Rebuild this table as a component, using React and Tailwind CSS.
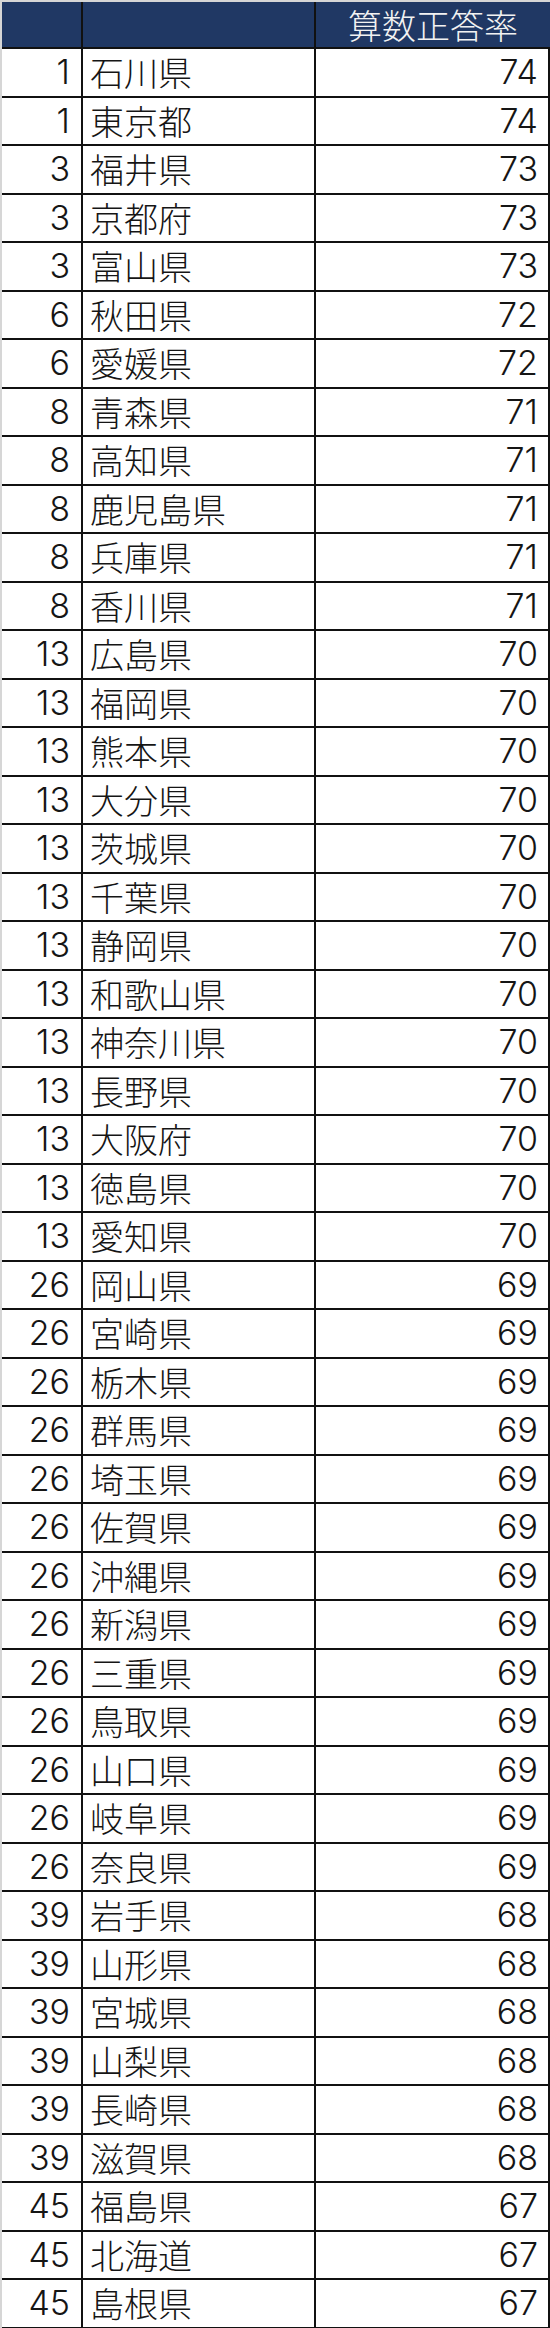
import React from 'react';

// 都道府県別 算数正答率ランキング
const ROWS = [
  [1, '石川県', 74],
  [1, '東京都', 74],
  [3, '福井県', 73],
  [3, '京都府', 73],
  [3, '富山県', 73],
  [6, '秋田県', 72],
  [6, '愛媛県', 72],
  [8, '青森県', 71],
  [8, '高知県', 71],
  [8, '鹿児島県', 71],
  [8, '兵庫県', 71],
  [8, '香川県', 71],
  [13, '広島県', 70],
  [13, '福岡県', 70],
  [13, '熊本県', 70],
  [13, '大分県', 70],
  [13, '茨城県', 70],
  [13, '千葉県', 70],
  [13, '静岡県', 70],
  [13, '和歌山県', 70],
  [13, '神奈川県', 70],
  [13, '長野県', 70],
  [13, '大阪府', 70],
  [13, '徳島県', 70],
  [13, '愛知県', 70],
  [26, '岡山県', 69],
  [26, '宮崎県', 69],
  [26, '栃木県', 69],
  [26, '群馬県', 69],
  [26, '埼玉県', 69],
  [26, '佐賀県', 69],
  [26, '沖縄県', 69],
  [26, '新潟県', 69],
  [26, '三重県', 69],
  [26, '鳥取県', 69],
  [26, '山口県', 69],
  [26, '岐阜県', 69],
  [26, '奈良県', 69],
  [39, '岩手県', 68],
  [39, '山形県', 68],
  [39, '宮城県', 68],
  [39, '山梨県', 68],
  [39, '長崎県', 68],
  [39, '滋賀県', 68],
  [45, '福島県', 67],
  [45, '北海道', 67],
  [45, '島根県', 67],
];

const font = { fontFamily: '"Noto Sans CJK JP", "Noto Sans", sans-serif' };
const numFont = { fontFamily: 'Inter, "Noto Sans CJK JP", sans-serif' };

const App = () => {
  return (
    <div className="w-[550px] bg-white text-[#151515] font-light border-l-2 border-t-2 border-[#d6d6d6]" style={font}>
      {/* header */}
      <div className="grid grid-cols-[81px_233px_1fr] h-[47px] bg-[#203864] border-b-2 border-[#111]">
        <div className="border-r-2 border-[#111]"></div>
        <div className="border-r-2 border-[#111]"></div>
        <div className="flex items-center justify-center text-[34px] leading-none text-[#f2f2f2]">算数正答率</div>
      </div>

      {ROWS.map(([rank, name, score], i) => (
        <div
          key={i}
          className="grid grid-cols-[81px_233px_1fr] h-[48.5px] border-b-2 border-[#111] border-r-2 text-[34px] leading-none"
        >
          <div className="flex items-center justify-end pr-[11px] border-r-2 border-[#111]" style={numFont}>{rank}</div>
          <div className="flex items-center pl-[7px] border-r-2 border-[#111]">{name}</div>
          <div className="flex items-center justify-end pr-[10px]" style={numFont}>{score}</div>
        </div>
      ))}
    </div>
  );
};

export default App;
